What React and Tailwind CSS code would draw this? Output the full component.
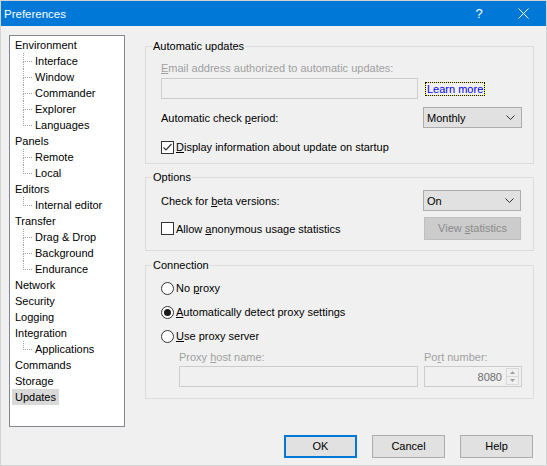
const FONT = { fontFamily: '"Liberation Sans", Arial, sans-serif' };

const tree = [
  { label: 'Environment', children: ['Interface', 'Window', 'Commander', 'Explorer', 'Languages'] },
  { label: 'Panels', children: ['Remote', 'Local'] },
  { label: 'Editors', children: ['Internal editor'] },
  { label: 'Transfer', children: ['Drag & Drop', 'Background', 'Endurance'] },
  { label: 'Network' },
  { label: 'Security' },
  { label: 'Logging' },
  { label: 'Integration', children: ['Applications'] },
  { label: 'Commands' },
  { label: 'Storage' },
  { label: 'Updates', selected: true },
];

function TreeChild({ label, last }) {
  return (
    <div className="flex h-[16px] pl-[13px]">
      <div className="flex w-[9px] flex-col">
        <div className="h-[9px] border-b border-l border-dotted border-[#a0a0a0]" />
        <div className={'flex-1 ' + (last ? '' : 'border-l border-dotted border-[#a0a0a0]')} />
      </div>
      <span className="px-[3px] leading-[16px]">{label}</span>
    </div>
  );
}

function Tree() {
  return (
    <div className="h-[392px] w-[116px] border border-[#828790] bg-white pt-[1px] text-black">
      {tree.map((n) => (
        <div key={n.label}>
          <div className="flex h-[16px] pl-[2px]">
            <span className={'px-[3px] leading-[16px] ' + (n.selected ? 'bg-[#d9d9d9]' : '')}>{n.label}</span>
          </div>
          {n.children &&
            n.children.map((c, i) => <TreeChild key={c} label={c} last={i === n.children.length - 1} />)}
        </div>
      ))}
    </div>
  );
}

function Group({ title, h, children }) {
  return (
    <fieldset className="w-[389px] border border-[#dcdcdc]" style={{ height: h }}>
      <legend className="ml-[6px] px-[1px] leading-[16px] text-black">{title}</legend>
      <div className="pl-[15px]">{children}</div>
    </fieldset>
  );
}

function Chevron() {
  return (
    <svg width="9" height="5" viewBox="0 0 9 5" className="shrink-0">
      <polyline points="0.5,0.5 4.5,4.5 8.5,0.5" fill="none" stroke="#333" strokeWidth="1" />
    </svg>
  );
}

function Select({ value, w }) {
  return (
    <div
      className="flex h-[21px] items-center justify-between border border-[#adadad] bg-[#e1e1e1] pl-[3px] pr-[6px] text-black"
      style={{ width: w }}
    >
      <span className="leading-[16px]">{value}</span>
      <Chevron />
    </div>
  );
}

function Checkbox({ checked }) {
  return (
    <div className="flex h-[13px] w-[13px] shrink-0 items-center justify-center border border-[#333333] bg-white">
      {checked && (
        <svg width="11" height="11" viewBox="0 0 11 11">
          <polyline points="1.5,5.5 4,8 9.5,2" fill="none" stroke="#333" strokeWidth="1.2" />
        </svg>
      )}
    </div>
  );
}

function Radio({ checked }) {
  return (
    <div className="flex h-[13px] w-[13px] shrink-0 items-center justify-center rounded-full border border-[#333333] bg-white">
      {checked && <div className="h-[7px] w-[7px] rounded-full bg-[#1a1a1a]" />}
    </div>
  );
}

function Button({ children, primary }) {
  return (
    <div
      className={
        'flex h-[23px] w-[73px] items-center justify-center bg-[#e1e1e1] text-black ' +
        (primary ? 'border-2 border-[#0078d7]' : 'border border-[#adadad]')
      }
    >
      {children}
    </div>
  );
}

export default function App() {
  return (
    <div
      className="flex h-[466px] w-[547px] flex-col overflow-hidden border border-[#d4d4d4] bg-[#f0f0f0] text-[11px] text-black"
      style={FONT}
    >
      {/* Title bar */}
      <div className="flex h-[25px] shrink-0 items-center bg-[#0078d7] text-white">
        <span className="ml-[3px] text-[11.5px] leading-[16px]">Preferences</span>
        <span className="ml-auto w-[14px] text-center text-[13px] leading-[16px]">?</span>
        <div className="ml-[31px] mr-[17px] flex h-[16px] w-[12px] items-center justify-center">
          <svg width="11" height="11" viewBox="0 0 11 11">
            <path d="M0.5 0.5 L10.5 10.5 M10.5 0.5 L0.5 10.5" stroke="#fff" strokeWidth="1" fill="none" />
          </svg>
        </div>
      </div>

      {/* Body */}
      <div className="mt-[9px] flex pl-[8px]">
        <Tree />
        <div className="ml-[20px] flex flex-col">
          {/* Automatic updates */}
          <div className="mt-[3px]">
            <Group title="Automatic updates" h={126}>
              <div className="pt-[6px]">
                <div className="h-[16px] leading-[16px] text-[#a0a0a0]">
                  <u>E</u>mail address authorized to automatic updates:
                </div>
                <div className="mt-[2px] flex h-[21px] items-center">
                  <div className="h-[21px] w-[257px] border border-[#cccccc] bg-[#f0f0f0]" />
                  <div className="ml-[7px] border border-dotted border-black bg-[#ffff00]">
                    <div className="bg-[#f0f0f0] px-[1px] leading-[12px] text-[#0000ff]">Learn more</div>
                  </div>
                </div>
                <div className="mt-[8px] flex h-[21px] items-center">
                  <span className="w-[262px] leading-[16px]">
                    Automatic check <u>p</u>eriod:
                  </span>
                  <Select value="Monthly" w={99} />
                </div>
                <div className="mt-[11px] flex h-[16px] items-center">
                  <Checkbox checked />
                  <span className="ml-[2px] leading-[16px]">
                    <u>D</u>isplay information about update on startup
                  </span>
                </div>
              </div>
            </Group>
          </div>

          {/* Options */}
          <div className="mt-[5px]">
            <Group title="Options" h={82}>
              <div className="pt-[5px]">
                <div className="flex h-[21px] items-center">
                  <span className="w-[262px] leading-[16px]">
                    Check for <u>b</u>eta versions:
                  </span>
                  <Select value="On" w={98} />
                </div>
                <div className="mt-[6px] flex h-[23px] items-center">
                  <div className="flex w-[263px] items-center">
                    <Checkbox />
                    <span className="ml-[2px] leading-[16px]">
                      Allow <u>a</u>nonymous usage statistics
                    </span>
                  </div>
                  <div className="flex h-[23px] w-[97px] items-center justify-center border border-[#bfbfbf] bg-[#cccccc] text-[#8a8a8a]">
                    <span>
                      View <u>s</u>tatistics
                    </span>
                  </div>
                </div>
              </div>
            </Group>
          </div>

          {/* Connection */}
          <div className="mt-[6px]">
            <Group title="Connection" h={142}>
              <div className="flex flex-col gap-[8px] pt-[7px]">
                <div className="flex h-[16px] items-center">
                  <Radio />
                  <span className="ml-[2px] leading-[16px]">
                    No <u>p</u>roxy
                  </span>
                </div>
                <div className="flex h-[16px] items-center">
                  <Radio checked />
                  <span className="ml-[2px] leading-[16px]">
                    <u>A</u>utomatically detect proxy settings
                  </span>
                </div>
                <div className="flex h-[16px] items-center">
                  <Radio />
                  <span className="ml-[2px] leading-[16px]">
                    <u>U</u>se proxy server
                  </span>
                </div>
              </div>
              <div className="mt-[5px] flex h-[16px] pl-[18px] leading-[16px] text-[#a0a0a0]">
                <span className="w-[245px]">
                  Proxy <u>h</u>ost name:
                </span>
                <span>
                  Po<u>r</u>t number:
                </span>
              </div>
              <div className="mt-[1px] flex h-[21px] pl-[18px]">
                <div className="h-[21px] w-[239px] border border-[#cccccc] bg-[#f0f0f0]" />
                <div className="ml-[6px] flex h-[21px] w-[98px] items-center justify-end border border-[#cccccc] bg-[#f0f0f0] pr-[2px]">
                  <span className="leading-[16px] text-[#6d6d6d]">8080</span>
                  <div className="ml-[4px] flex h-[17px] w-[13px] flex-col">
                    <div className="flex flex-1 items-center justify-center border border-[#dadada]">
                      <svg width="5" height="3" viewBox="0 0 5 3">
                        <polygon points="2.5,0 5,3 0,3" fill="#a0a0a0" />
                      </svg>
                    </div>
                    <div className="flex flex-1 items-center justify-center border border-t-0 border-[#dadada]">
                      <svg width="5" height="3" viewBox="0 0 5 3">
                        <polygon points="0,0 5,0 2.5,3" fill="#a0a0a0" />
                      </svg>
                    </div>
                  </div>
                </div>
              </div>
            </Group>
          </div>
        </div>
      </div>

      {/* Buttons */}
      <div className="mt-[8px] flex justify-end gap-[15px] pr-[13px]">
        <Button primary>OK</Button>
        <Button>Cancel</Button>
        <Button>Help</Button>
      </div>
    </div>
  );
}
